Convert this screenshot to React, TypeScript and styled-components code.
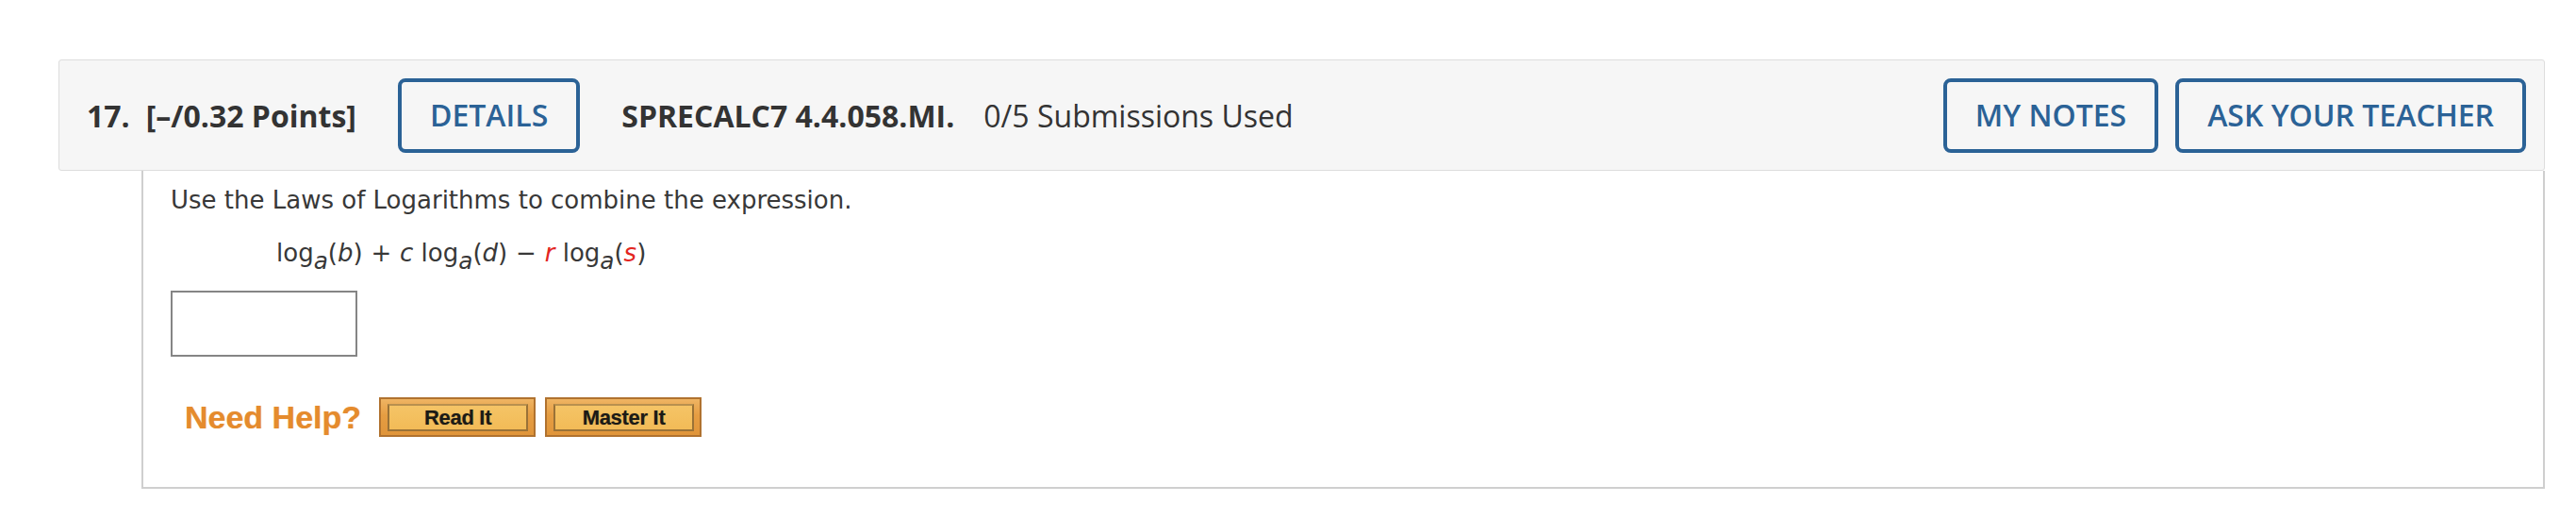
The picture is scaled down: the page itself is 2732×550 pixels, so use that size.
import React from "react";
import styled, { createGlobalStyle } from "styled-components";

const GlobalStyle = createGlobalStyle`
  html, body {
    margin: 0;
    padding: 0;
    background: #ffffff;
  }
`;

const Page = styled.div`
  padding: 63px 33px 0 62px;
`;

const Question = styled.section`
  display: flex;
  flex-direction: column;
`;

const Header = styled.header`
  box-sizing: border-box;
  height: 118px;
  display: flex;
  align-items: center;
  padding: 0 19px 0 29px;
  background: #f6f6f6;
  border: 1px solid #dddddd;
  border-radius: 3px;
  font-family: "Open Sans", "Liberation Sans", sans-serif;
  font-size: 32px;
  color: #333333;
`;

const Number = styled.span`
  font-weight: 700;
  margin-right: 17px;
`;

const Points = styled.span`
  font-weight: 700;
  margin-right: 44px;
`;

const OutlineButton = styled.button`
  box-sizing: border-box;
  height: 79px;
  padding: 0 30px;
  border: 4px solid #2b6296;
  border-radius: 8px;
  background: transparent;
  color: #2b6296;
  font-family: "Open Sans", "Liberation Sans", sans-serif;
  font-size: 32px;
  font-weight: 600;
  line-height: 1;
  white-space: nowrap;
`;

const Code = styled.span`
  font-weight: 700;
  margin-left: 44px;
  margin-right: 31px;
  white-space: nowrap;
`;

const Submissions = styled.span`
  font-weight: 400;
  white-space: nowrap;
`;

const RightGroup = styled.div`
  margin-left: auto;
  display: flex;
  gap: 18px;
`;

const Body = styled.div`
  margin-left: 88px;
  padding: 16px 0 53px 29px;
  border-left: 2px solid #cfcfcf;
  border-right: 2px solid #cfcfcf;
  border-bottom: 2px solid #cfcfcf;
  font-family: "DejaVu Sans", Verdana, sans-serif;
  font-size: 26px;
  line-height: 30px;
  color: #383838;
`;

const Prompt = styled.p`
  margin: 0;
`;

const MathLine = styled.div`
  margin: 26px 0 0 112px;
  white-space: nowrap;
`;

const Var = styled.i<{ $red?: boolean }>`
  font-style: italic;
  color: ${(p) => (p.$red ? "#e3261f" : "inherit")};
`;

const Sub = styled.sub`
  font-size: 0.95em;
  font-style: italic;
  line-height: 0;
  vertical-align: -8px;
`;

const Op = styled.span`
  margin: 0 0.34em;
`;

const AnswerBox = styled.input`
  box-sizing: border-box;
  display: block;
  width: 198px;
  height: 70px;
  margin: 25px 0 0 0;
  border: 2px solid #858585;
  background: #ffffff;
  outline: none;
`;

const HelpRow = styled.div`
  display: flex;
  align-items: center;
  gap: 19px;
  margin: 43px 0 0 15px;
`;

const HelpLabel = styled.span`
  font-family: "Liberation Sans", Arial, sans-serif;
  font-weight: 700;
  font-size: 34px;
  line-height: 42px;
  color: #e58b2d;
  text-shadow: 0 0 1px rgba(229, 139, 45, 0.6);
`;

const HelpButtons = styled.div`
  display: flex;
  gap: 10px;
`;

const HelpButton = styled.button`
  box-sizing: border-box;
  display: flex;
  width: 166px;
  height: 42px;
  padding: 5px 6px 4px 7px;
  border: 2px solid #b0722f;
  background: linear-gradient(#efb463 0%, #e59d42 45%, #e0953a 100%);
  cursor: pointer;
`;

const HelpFace = styled.span`
  flex: 1;
  display: flex;
  align-items: center;
  justify-content: center;
  border: 2px solid #9a7237;
  border-top-color: #b8904f;
  background: linear-gradient(#f5c466, #f2bb57);
  font-family: "Liberation Sans", Arial, sans-serif;
  font-weight: 700;
  font-size: 22px;
  letter-spacing: -0.3px;
  color: #1b1a16;
  text-shadow: 0 0 1px rgba(0, 0, 0, 0.4);
`;

export default function App() {
  return (
    <>
      <GlobalStyle />
      <Page>
        <Question>
          <Header>
            <Number>17.</Number>
            <Points>[–/0.32 Points]</Points>
            <OutlineButton>DETAILS</OutlineButton>
            <Code>SPRECALC7 4.4.058.MI.</Code>
            <Submissions>0/5 Submissions Used</Submissions>
            <RightGroup>
              <OutlineButton>MY NOTES</OutlineButton>
              <OutlineButton>ASK YOUR TEACHER</OutlineButton>
            </RightGroup>
          </Header>
          <Body>
            <Prompt>Use the Laws of Logarithms to combine the expression.</Prompt>
            <MathLine>
              log<Sub>a</Sub>(<Var>b</Var>)<Op>+</Op>
              <Var>c</Var> log<Sub>a</Sub>(<Var>d</Var>)<Op>−</Op>
              <Var $red>r</Var> log<Sub>a</Sub>(<Var $red>s</Var>)
            </MathLine>
            <AnswerBox type="text" aria-label="answer" />
            <HelpRow>
              <HelpLabel>Need Help?</HelpLabel>
              <HelpButtons>
                <HelpButton>
                  <HelpFace>Read It</HelpFace>
                </HelpButton>
                <HelpButton>
                  <HelpFace>Master It</HelpFace>
                </HelpButton>
              </HelpButtons>
            </HelpRow>
          </Body>
        </Question>
      </Page>
    </>
  );
}
